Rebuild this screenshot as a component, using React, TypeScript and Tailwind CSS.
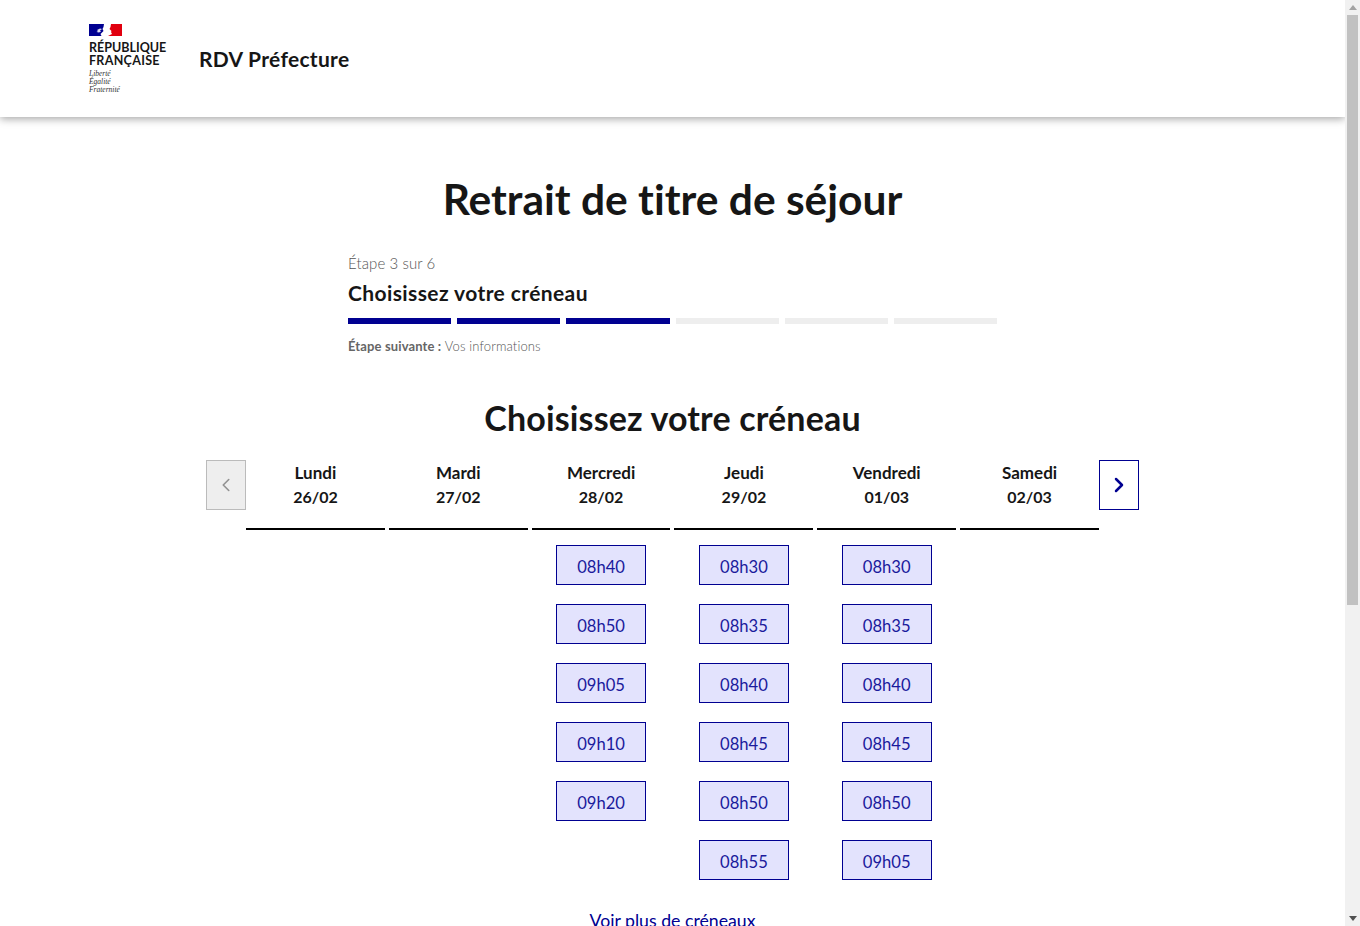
import { ChevronLeft, ChevronRight } from "lucide-react";

const days = [
  { name: "Lundi", date: "26/02", slots: [] as string[] },
  { name: "Mardi", date: "27/02", slots: [] as string[] },
  { name: "Mercredi", date: "28/02", slots: ["08h40", "08h50", "09h05", "09h10", "09h20"] },
  { name: "Jeudi", date: "29/02", slots: ["08h30", "08h35", "08h40", "08h45", "08h50", "08h55"] },
  { name: "Vendredi", date: "01/03", slots: ["08h30", "08h35", "08h40", "08h45", "08h50", "09h05"] },
  { name: "Samedi", date: "02/03", slots: [] as string[] },
];

const steps = [true, true, true, false, false, false];

function Flag() {
  return (
    <svg width="33" height="12" viewBox="0 0 33 12" className="block">
      <rect width="33" height="12" fill="#fff" />
      <path d="M0 0h15l-.5 3-1 2 1 2-2 2-1 1 1 2H0z" fill="#000091" />
      <path d="M22 0h11v12H19l2-1 2-1-1-2 .5-1-2-2 1-2z" fill="#e1000f" />
      <path d="M8 6l3-1.500 2 .5-2 1.500 1 1-2 1-2.500-.5 1.500-1z" fill="#fff" opacity="0.85" />
    </svg>
  );
}

export default function App() {
  return (
    <div className="flex h-screen overflow-hidden bg-white font-['Lato',sans-serif] text-[#161616] [font-variant-ligatures:none]">
      <div className="h-full min-w-0 flex-1 overflow-hidden">
        <header className="flex h-[117px] items-start bg-white pl-[89px] shadow-[0_2px_8px_rgba(0,0,0,0.35)]">
          <div className="w-[110px] pt-6">
            <Flag />
            <p className="mt-[5px] text-[12.5px] leading-[13px] font-bold whitespace-nowrap">
              RÉPUBLIQUE
              <br />
              <span className="tracking-[0.3px]">FRANÇAISE</span>
            </p>
            <p className="mt-[3px] font-['Liberation_Serif',serif] text-[7.5px] leading-[8px] text-[#333] italic">
              Liberté
              <br />
              Égalité
              <br />
              Fraternité
            </p>
          </div>
          <span className="pt-[45px] text-[21px] leading-[28px] font-bold tracking-[0.3px]">RDV Préfecture</span>
        </header>

        <main>
          <h1 className="mt-[58px] text-center text-[42.5px] leading-[48px] font-bold">Retrait de titre de séjour</h1>

          <section className="mx-auto mt-[28px] w-[649px]">
            <p className="text-[15px] leading-[24px] font-light tracking-[0.1px] text-[#555]">Étape 3 sur 6</p>
            <h2 className="mt-1 text-[21px] leading-[28px] font-bold tracking-[0.4px]">Choisissez votre créneau</h2>
            <div className="mt-[11px] flex gap-[6px]">
              {steps.map((done, i) => (
                <div key={i} className={done ? "h-[6px] flex-1 bg-[#000091]" : "h-[6px] flex-1 bg-[#eeeeee]"} />
              ))}
            </div>
            <p className="mt-[12px] text-[13px] leading-[20px] tracking-[0.13px] text-[#666]">
              <b>Étape suivante :</b> <span className="font-light text-[#555]">Vos informations</span>
            </p>
          </section>

          <h2 className="mt-[42px] text-center text-[34px] leading-[40px] font-bold tracking-[0.15px]">Choisissez votre créneau</h2>

          <section className="mx-auto mt-[22px] flex w-[933px] items-start">
            <button className="flex h-[50px] w-10 shrink-0 items-center justify-center border border-[#bbbbbb] bg-[#eeeeee] text-[#929292]">
              <ChevronLeft size={22} strokeWidth={1.75} />
            </button>
            <div className="grid flex-1 grid-cols-6 gap-x-1">
              {days.map((day) => (
                <div key={day.name} className="flex flex-col items-center">
                  <div className="h-[70px] w-full border-b-2 border-black pt-px text-center leading-[24px] font-bold">
                    <p className="text-[17px]">{day.name}</p>
                    <p className="text-[16px]">{day.date}</p>
                  </div>
                  <div className="mt-[15px] flex flex-col gap-[19px]">
                    {day.slots.map((slot) => (
                      <button
                        key={slot}
                        className="h-10 w-[90px] border border-[#000091] bg-[#e3e3fd] pt-1 text-center text-[16.6px] leading-[24px] text-[#1a1a9c]"
                      >
                        {slot}
                      </button>
                    ))}
                  </div>
                </div>
              ))}
            </div>
            <button className="flex h-[50px] w-10 shrink-0 items-center justify-center border border-[#000091] bg-white text-[#000091]">
              <ChevronRight size={24} strokeWidth={2.5} />
            </button>
          </section>

          <div className="mt-[29px] text-center text-[17.7px] leading-[24px] text-[#000091]">
            <a className="underline">Voir plus de créneaux</a>
          </div>
        </main>
      </div>

      {/* scrollbar du navigateur */}
      <div className="relative h-full w-[15px] shrink-0 bg-[#f1f1f1]">
        <div className="mx-auto h-0 w-0 translate-y-[5px] border-x-[4px] border-b-[5px] border-x-transparent border-b-[#a3a3a3]" />
        <div className="absolute top-[15px] left-[2px] h-[590px] w-[11px] bg-[#c1c1c1]" />
        <div className="absolute bottom-[5px] left-[3.5px] h-0 w-0 border-x-[4px] border-t-[5px] border-x-transparent border-t-[#505050]" />
      </div>
    </div>
  );
}
